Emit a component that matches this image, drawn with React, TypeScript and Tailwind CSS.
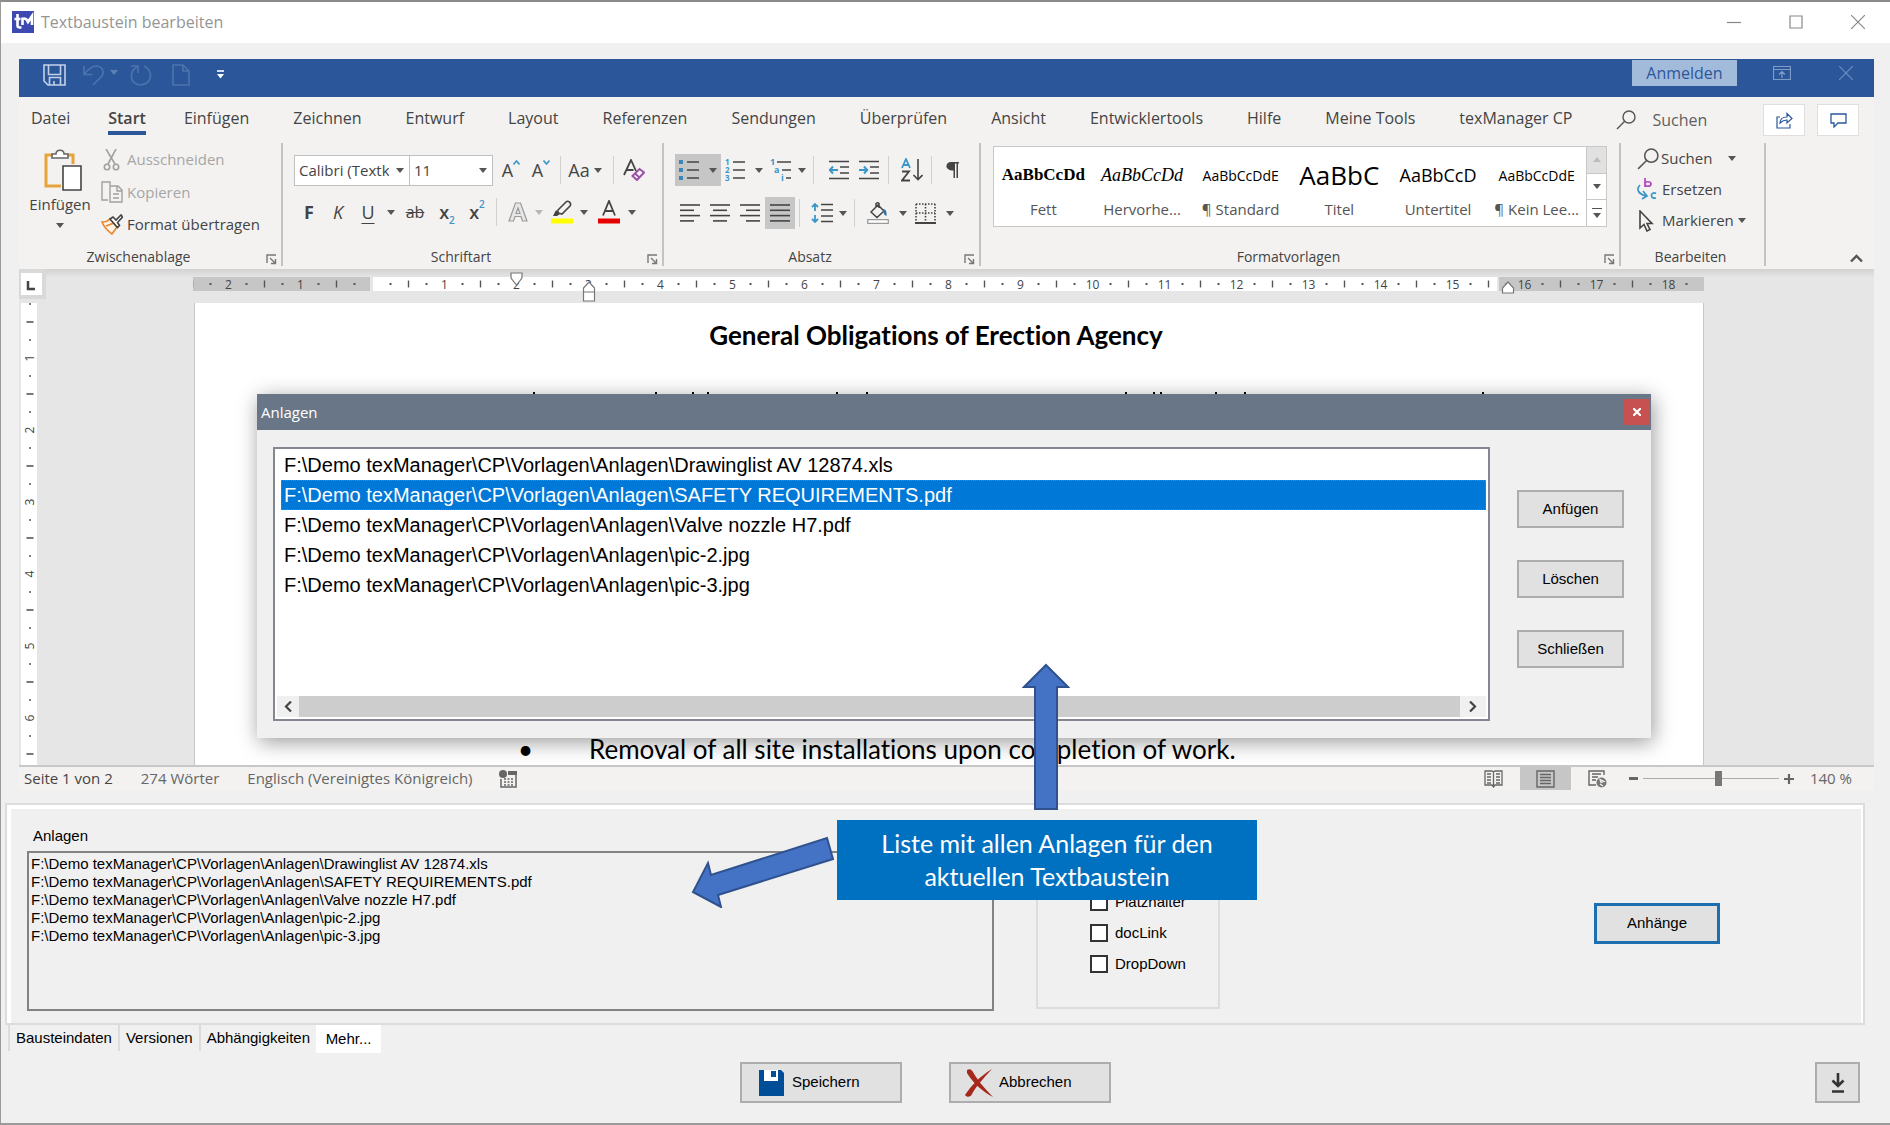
import type { ReactNode } from "react";
import clsx from "clsx";

const files = [
  "F:\\Demo texManager\\CP\\Vorlagen\\Anlagen\\Drawinglist AV 12874.xls",
  "F:\\Demo texManager\\CP\\Vorlagen\\Anlagen\\SAFETY REQUIREMENTS.pdf",
  "F:\\Demo texManager\\CP\\Vorlagen\\Anlagen\\Valve nozzle H7.pdf",
  "F:\\Demo texManager\\CP\\Vorlagen\\Anlagen\\pic-2.jpg",
  "F:\\Demo texManager\\CP\\Vorlagen\\Anlagen\\pic-3.jpg",
];

const ribbonTabs = [
  "Datei", "Start", "Einfügen", "Zeichnen", "Entwurf", "Layout", "Referenzen", "Sendungen",
  "Überprüfen", "Ansicht", "Entwicklertools", "Hilfe", "Meine Tools", "texManager CP",
];

const styleCards = [
  { name: "Fett", sample: "AaBbCcDd", cls: "font-['Liberation_Serif',serif] text-[17px] font-bold" },
  { name: "Hervorhe...", sample: "AaBbCcDd", cls: "font-['Liberation_Serif',serif] text-[18px] italic" },
  { name: "¶ Standard", sample: "AaBbCcDdE", cls: "text-[14px]" },
  { name: "Titel", sample: "AaBbC", cls: "text-[26px]" },
  { name: "Untertitel", sample: "AaBbCcD", cls: "text-[18px] text-[#5a5a5a]" },
  { name: "¶ Kein Lee...", sample: "AaBbCcDdE", cls: "text-[14px]" },
];

type IconProps = { w: number; h: number; children: ReactNode; className?: string; color?: string };

function Icon({ w, h, children, className, color = "#444" }: IconProps) {
  return (
    <svg
      width={w}
      height={h}
      viewBox={`0 0 ${w} ${h}`}
      fill="none"
      stroke={color}
      strokeWidth="1.6"
      className={clsx("shrink-0", className)}
      aria-hidden="true"
    >
      {children}
    </svg>
  );
}

function Caret({ className, color = "#555" }: { className?: string; color?: string }) {
  return (
    <Icon w={8} h={5} className={className}>
      <path d="M0 0h8l-4 5z" fill={color} stroke="none" />
    </Icon>
  );
}

function Tool({ label, className, children }: { label: string; className?: string; children: ReactNode }) {
  return (
    <button type="button" aria-label={label} className={clsx("flex h-8 shrink-0 items-center justify-center", className)}>
      {children}
    </button>
  );
}

function Divider() {
  return <span className="mx-1 h-7 w-px shrink-0 bg-[#d2d0ce]" />;
}

function Group({ title, launcher, className, children }: { title: string; launcher?: boolean; className?: string; children: ReactNode }) {
  return (
    <section aria-label={title} className={clsx("mb-[3px] flex flex-col border-r-2 border-[#c4c3c1]", className)}>
      <div className="flex h-[105px]">{children}</div>
      <div className="flex h-[18px] items-center pr-1">
        <span className={clsx("flex-1 text-center text-[14px] leading-[18px] text-[#444]", launcher && "pr-2")}>{title}</span>
        {launcher && (
          <Icon w={11} h={11} color="#777" className="mt-1">
            <path d="M1 9V1h9M4 4l5 5M9.500 5v4.500H5" strokeWidth="1.4" />
          </Icon>
        )}
      </div>
    </section>
  );
}

function Lines({ rows }: { rows: [number, number][] }) {
  return (
    <Icon w={20} h={20}>
      {rows.map(([a, b], i) => (
        <path key={i} d={`M${a} ${2 + i * 5.3}H${b}`} />
      ))}
    </Icon>
  );
}

function HorizontalRuler() {
  const marks = [];
  for (let q = -10; q <= 73; q++) {
    const x = 179.5 + q * 18;
    if (q === 0 || x > 1500) continue;
    if (q % 4 === 0) {
      marks.push(
        <text key={q} x={x} y="12" textAnchor="middle" fontSize="12" fill="#444" stroke="none">
          {Math.abs(q / 4)}
        </text>
      );
    } else if (q % 2 === 0) {
      marks.push(<path key={q} d={`M${x} 4v7`} stroke="#555" />);
    } else {
      marks.push(<path key={q} d={`M${x} 6.500v2`} stroke="#555" strokeWidth="2" />);
    }
  }
  return (
    <svg width="1511" height="33" viewBox="0 -1 1511 33" fill="none" strokeWidth="1.4" className="block font-['Open_Sans',sans-serif]" aria-label="Lineal">
      <path d="M0 7h177v14H0zM1306 7h205v14h-205z" fill="#c6c6c6" />
      <path d="M180 7h1124v14H180z" fill="#fff" />
      <g transform="translate(0 6.500)">{marks}</g>
      <g fill="#fff" stroke="#777" strokeWidth="1.2">
        <path d="M318 3h11v5l-5.500 7-5.500-7z" />
        <path d="M390.500 22v-4l5.500-6 5.500 6v4zM390.500 22h11v9h-11z" />
        <path d="M1309.500 23v-5l5.500-6 5.500 6v5z" />
      </g>
    </svg>
  );
}

function VerticalRuler() {
  const marks = [];
  for (let q = 1; q <= 26; q++) {
    const y = -17 + q * 18;
    if (q % 4 === 0) {
      marks.push(
        <text key={q} transform={`translate(13 ${y}) rotate(-90)`} textAnchor="middle" fontSize="12" fill="#444" stroke="none">
          {q / 4}
        </text>
      );
    } else {
      marks.push(<path key={q} d={q % 2 === 0 ? `M5.500 ${y}h7` : `M8 ${y}h2`} stroke="#555" />);
    }
  }
  return (
    <svg width="16" height="462" viewBox="0 0 16 462" fill="none" strokeWidth="1.6" className="ml-[2px] block bg-white font-['Open_Sans',sans-serif]" aria-label="Lineal vertikal">
      {marks}
    </svg>
  );
}

function TitleBar() {
  return (
    <header className="flex h-[41px] items-center bg-white pl-[11px] pb-[2px]">
      <svg width="22" height="22" viewBox="0 0 22 22" className="shrink-0" aria-hidden="true">
        <path d="M0 0h22v22H0z" fill="#3d48b0" />
        <path d="M5.500 3v11.500q0 2 2.500 2h1.500M2.500 8h6M10.500 14V6.500l0 2q1-2 4 0l0 0L16 11l4-6v9" fill="none" stroke="#fff" strokeWidth="2.600" />
      </svg>
      <h1 className="ml-[7px] flex-1 text-[16px] text-[#959595]">Textbaustein bearbeiten</h1>
      <div className="flex items-center gap-12 pr-[25px]">
        <button type="button" aria-label="Minimieren">
          <Icon w={14} h={14} color="#888"><path d="M0 7.500h14" strokeWidth="1.200" /></Icon>
        </button>
        <button type="button" aria-label="Maximieren">
          <Icon w={14} h={14} color="#888"><path d="M1 1h12v12H1z" strokeWidth="1.200" /></Icon>
        </button>
        <button type="button" aria-label="Fenster schließen">
          <Icon w={14} h={14} color="#888"><path d="M0 0l14 14M14 0L0 14" strokeWidth="1.200" /></Icon>
        </button>
      </div>
    </header>
  );
}

function QuickAccess() {
  return (
    <div className="flex h-[38px] items-start bg-[#2b579a] pl-6">
      <div className="flex h-[31px] flex-1 items-center">
        <button type="button" aria-label="Speichern (Schnellzugriff)">
          <Icon w={23} h={22} color="#c3d1e8">
            <path d="M1 1h21v20H5l-4-4zM5.500 1v9.500h12V1M6.500 21v-7.500h11V21M11 21v-4" />
          </Icon>
        </button>
        <button type="button" aria-label="Rückgängig" className="ml-[17px] flex items-center gap-[6px]">
          <Icon w={21} h={22} color="#4c73ad">
            <path d="M1 2v8.500h8.500M1.500 10C6 4 10 2 14 2c8 1 7 9 3 12l-7 7" />
          </Icon>
          <Caret color="#5d80b6" className="mb-1" />
        </button>
        <button type="button" aria-label="Wiederholen" className="ml-3">
          <Icon w={22} h={22} color="#4c73ad">
            <path d="M1 2h7v7M7.500 2.500C-1 7-1 20 10.500 21 22 20 24 7 14 2" />
          </Icon>
        </button>
        <button type="button" aria-label="Neues Dokument" className="ml-5">
          <Icon w={18} h={22} color="#4c73ad"><path d="M1 1h10l6 6v14H1zM11 1v6h6" /></Icon>
        </button>
        <button type="button" aria-label="Symbolleiste anpassen" className="ml-[27px]">
          <Icon w={7} h={9} color="#fff">
            <path d="M0 1h7" />
            <path d="M0 4h7L3.500 8.500z" fill="#fff" stroke="none" />
          </Icon>
        </button>
      </div>
      <button type="button" className="mt-px h-[26px] w-[105px] bg-[#a3bbdb] text-[16px] leading-[24px] text-[#2b579a]">
        Anmelden
      </button>
      <div className="flex h-[28px] items-center gap-12 pl-9 pr-[21px]">
        <button type="button" aria-label="Menüband-Anzeigeoptionen">
          <Icon w={18} h={14} color="#7f9cc9">
            <path d="M.5 .5h17v13H.5zM1 3.500h16M9 12V6M6 8.500L9 5.500l3 3" strokeWidth="1.200" />
          </Icon>
        </button>
        <button type="button" aria-label="Word schließen">
          <Icon w={14} h={14} color="#6d8dbf"><path d="M0 0l14 14M14 0L0 14" strokeWidth="1.200" /></Icon>
        </button>
      </div>
    </div>
  );
}

function Magnifier({ size }: { size: number }) {
  return (
    <svg width={size} height={size} viewBox="0 0 20 20" fill="none" stroke="#555" strokeWidth="1.400" className="shrink-0" aria-hidden="true">
      <circle cx="13" cy="7" r="6" />
      <path d="M8.700 11.300L1 19" />
    </svg>
  );
}

function RibbonTabs() {
  return (
    <nav className="flex h-[46px] items-center pl-3 text-[16px] text-[#444]">
      {ribbonTabs.map((t, i) => (
        <button
          key={t}
          type="button"
          className={clsx(
            "h-[30px] whitespace-nowrap border-b-4 leading-[26px]",
            i < 2 ? "mr-[38px]" : "mr-[44px]",
            t === "Start" ? "border-[#2b579a] font-semibold" : "border-transparent"
          )}
        >
          {t}
        </button>
      ))}
      <label className="flex min-w-0 flex-1 items-center gap-[16px] text-[#666]">
        <Magnifier size={20} />
        <input type="text" placeholder="Suchen" aria-label="Suchen" className="w-20 bg-transparent placeholder:text-[#5f5f5f]" />
      </label>
      <div className="flex gap-3 pr-[15px]">
        <button type="button" aria-label="Freigeben" className="flex h-8 w-[42px] items-center justify-center border border-[#e1dfdd] bg-white">
          <Icon w={17} h={17} color="#2b579a">
            <path d="M4 5H1v11h13v-4M4 11c0-4 3-6 7-6V1.500l5 5-5 4.500V8C8 8 6 9 4 11z" strokeWidth="1.200" />
          </Icon>
        </button>
        <button type="button" aria-label="Kommentare" className="flex h-8 w-[42px] items-center justify-center border border-[#e1dfdd] bg-white">
          <Icon w={17} h={15} color="#2b579a">
            <path d="M1 1h15v9H8l-4 4v-4H1z" strokeWidth="1.300" />
          </Icon>
        </button>
      </div>
    </nav>
  );
}

function ClipboardGroup() {
  return (
    <Group title="Zwischenablage" launcher className="w-[264px] shrink-0">
      <button type="button" className="flex w-[82px] flex-col items-center pt-[6px] text-[15px] text-[#444]">
        <Icon w={38} h={42} className="ml-1.5">
          <path d="M9 6H2v31h15M23 6h6v9" stroke="#e8a33d" strokeWidth="3" />
          <path d="M8 9V5h4c0-5 8-5 8 0h4v4z" fill="#fff" stroke="#666" />
          <path d="M19 17h18v24H19z" fill="#fff" stroke="#444" />
        </Icon>
        <span className="mt-[2px] leading-[22px]">Einfügen</span>
        <Caret className="mt-2" />
      </button>
      <div className="flex flex-col text-[15px]">
        <button type="button" className="flex h-[33px] items-center gap-[6px] pl-[2px] text-[#a6a6a6]">
          <Icon w={18} h={22} color="#a0a0a0">
            <path d="M3 0l9 15M13 0L5 15" />
            <circle cx="4" cy="18" r="2.700" />
            <circle cx="13" cy="18" r="2.700" />
          </Icon>
          Ausschneiden
        </button>
        <button type="button" className="flex h-8 items-center gap-1 text-[#a6a6a6]">
          <Icon w={22} h={22} color="#a0a0a0">
            <path d="M7 19H1V1h8v3M9 5h8l4 4v12H9zM16 5v5h5M12 13h6M12 17h6" strokeWidth="1.400" />
          </Icon>
          Kopieren
        </button>
        <button type="button" className="flex h-[33px] items-center gap-1 text-[#444]">
          <Icon w={22} h={21}>
            <path d="M1 8c4 0 6-1 8-3l7 8-5 7C7 17 3 13 1 8zM5 12l8-3" stroke="#e8862d" fill="#fdf3e6" />
            <path d="M9 5l3-2 3 3 5-5 1.500 2-5 5.500 2 3-2 2z" fill="#fff" />
          </Icon>
          Format übertragen
        </button>
      </div>
    </Group>
  );
}

function FontGroup() {
  return (
    <Group title="Schriftart" launcher className="w-[381px] shrink-0">
      <div className="flex flex-col pl-[11px] pt-[11px] text-[#444]">
        <div className="flex h-8 items-center">
          <label className="relative flex items-center">
            <select aria-label="Schriftart" className="h-[31px] w-[116px] appearance-none border border-[#c0c0c0] bg-white pl-1 pr-5 text-[15px]">
              <option>Calibri (Textkörper)</option>
            </select>
            <Caret className="pointer-events-none absolute right-1.5" />
          </label>
          <label className="relative -ml-px flex items-center">
            <select aria-label="Schriftgrad" className="h-[31px] w-[84px] appearance-none border border-[#c0c0c0] bg-white pl-1 text-[15px]">
              <option>11</option>
            </select>
            <Caret className="pointer-events-none absolute right-1.5" />
          </label>
          <Tool label="Schriftgrad vergrößern" className="ml-[3px] w-[30px] text-[18px]">
            A
            <Icon w={7} h={5} color="#3a96c8" className="mb-4"><path d="M.5 4.500l3-3.500 3 3.500" /></Icon>
          </Tool>
          <Tool label="Schriftgrad verkleinern" className="w-[30px] text-[18px]">
            A
            <Icon w={7} h={5} color="#3a96c8" className="mb-4"><path d="M.5 .5l3 3.500 3-3.500" /></Icon>
          </Tool>
          <Divider />
          <Tool label="Groß-/Kleinschreibung" className="-ml-1 w-12 gap-1 text-[18px]">
            Aa <Caret />
          </Tool>
          <Divider />
          <Tool label="Formatierung löschen" className="ml-1 w-6">
            <Icon w={22} h={22}>
              <path d="M1 16L8 1l5 11M3.500 11h7" strokeWidth="1.800" />
              <path d="M9.500 17l7-7 4.500 3.500-7 7.500zM12 14.500l4.500 4" stroke="#9b4fa8" fill="#fff" strokeWidth="2" />
            </Icon>
          </Tool>
        </div>
        <div className="mt-[10px] flex h-8 items-center text-[18px]">
          <Tool label="Fett" className="w-[30px] font-bold">F</Tool>
          <Tool label="Kursiv" className="w-7 italic">K</Tool>
          <Tool label="Unterstrichen" className="w-8 underline underline-offset-4">U</Tool>
          <Caret className="mx-[3px]" />
          <Tool label="Durchgestrichen" className="w-[34px] text-[16px] line-through">ab</Tool>
          <Tool label="Tiefgestellt" className="w-[30px] font-semibold">
            x<span className="mt-4 text-[10px] text-[#3a96c8]">2</span>
          </Tool>
          <Tool label="Hochgestellt" className="w-[30px] font-semibold">
            x<span className="mb-4 text-[10px] text-[#3a96c8]">2</span>
          </Tool>
          <Divider />
          <Tool label="Texteffekte" className="w-[34px] text-[#aaa]">
            <Icon w={20} h={20} color="#999">
              <path d="M7.500 1h5L19 19h-4.500l-1.500-4.500H7L5.500 19H1zM10 6l-2 5.500h4z" strokeWidth="1.200" fill="#e6e6e6" />
            </Icon>
          </Tool>
          <Caret color="#b5b5b5" />
          <Tool label="Texthervorhebungsfarbe" className="ml-[2px] w-[34px]">
            <Icon w={22} h={24}>
              <path d="M0 18.500h22v5H0z" fill="#ff0" stroke="none" />
              <path d="M2 16l3-6 4 4-3 2z" fill="#444" stroke="none" />
              <path d="M7 10l8-8c2-2 6 1 4 4l-8 8-4-1z" />
            </Icon>
          </Tool>
          <Caret className="mx-px" />
          <Tool label="Schriftfarbe" className="ml-[3px] w-[34px]">
            <Icon w={22} h={24}>
              <path d="M0 18.500h22v5H0z" fill="#e60000" stroke="none" />
              <path d="M5 15.500L11 1l6 14.500M7 11h8" strokeWidth="1.800" />
            </Icon>
          </Tool>
          <Caret className="mx-[2px]" />
        </div>
      </div>
    </Group>
  );
}

function ParagraphGroup() {
  return (
    <Group title="Absatz" launcher className="w-[317px] shrink-0">
      <div className="flex flex-col pl-[11px] pt-[11px] text-[#444]">
        <div className="flex h-8 items-center">
          <Tool label="Aufzählungszeichen" className="w-[46px] gap-[10px] bg-[#c6c6c6]">
            <Icon w={20} h={20}>
              <path d="M8 2h13M8 10h13M8 18h13" />
              <path d="M0 0h4v4H0zM0 8h4v4H0zM0 16h4v4H0z" fill="#3a86b4" stroke="none" />
            </Icon>
            <Caret />
          </Tool>
          <Tool label="Nummerierung" className="w-[46px] gap-[10px]">
            <Icon w={20} h={22}>
              <path d="M8 3h13M8 11h13M8 19h13" />
              <g fill="#3a96c8" stroke="none" fontSize="8" fontWeight="700">
                <text x="0" y="6">1</text>
                <text x="0" y="14">2</text>
                <text x="0" y="22">3</text>
              </g>
            </Icon>
            <Caret />
          </Tool>
          <Tool label="Liste mit mehreren Ebenen" className="w-[42px] gap-[7px]">
            <Icon w={21} h={22}>
              <path d="M7 3h14M12 11h9M16 19h5" />
              <g fill="#3a96c8" stroke="none" fontSize="9" fontWeight="700">
                <text x="0" y="6">1</text>
                <text x="4" y="14">a</text>
                <text x="11" y="22">i</text>
              </g>
            </Icon>
            <Caret />
          </Tool>
          <Divider />
          <Tool label="Einzug verkleinern" className="ml-1.5 w-[30px]">
            <Icon w={20} h={20}>
              <path d="M0 1.500h20M11 7h9M11 13h9M0 18.500h20" />
              <path d="M0 10h9M4 6.500L.8 10 4 13.500" stroke="#3a96c8" strokeWidth="2" />
            </Icon>
          </Tool>
          <Tool label="Einzug vergrößern" className="w-[30px]">
            <Icon w={20} h={20}>
              <path d="M0 1.500h20M11 7h9M11 13h9M0 18.500h20" />
              <path d="M0 10h8M5 6.500L8.200 10 5 13.500" stroke="#3a96c8" strokeWidth="2" />
            </Icon>
          </Tool>
          <Divider />
          <Tool label="Sortieren" className="ml-1 w-[30px]">
            <Icon w={22} h={24}>
              <path d="M1 10L5 1l4 9M2.500 7h5" stroke="#3a96c8" strokeWidth="1.800" />
              <path d="M1 13.500h7L1 22.500h8" strokeWidth="1.800" />
              <path d="M17 1v20M12.500 17l4.500 4.500 4.500-4.500" />
            </Icon>
          </Tool>
          <Divider />
          <Tool label="Formatierungszeichen" className="ml-1 w-6">
            <Icon w={13} h={18}>
              <path d="M7 1h6v1.500h-1V17h-1.500V2.500H9V17H7.500V9.500C-2 9.500-1 1 5 1z" fill="#444" stroke="none" />
            </Icon>
          </Tool>
        </div>
        <div className="mt-[11px] flex h-8 items-center">
          <Tool label="Linksbündig" className="w-[30px]"><Lines rows={[[0, 20], [0, 14], [0, 20], [0, 14]]} /></Tool>
          <Tool label="Zentriert" className="w-[30px]"><Lines rows={[[0, 20], [3, 17], [0, 20], [3, 17]]} /></Tool>
          <Tool label="Rechtsbündig" className="w-[30px]"><Lines rows={[[0, 20], [6, 20], [0, 20], [6, 20]]} /></Tool>
          <Tool label="Blocksatz" className="w-[30px] bg-[#c6c6c6]"><Lines rows={[[0, 20], [0, 20], [0, 20], [0, 20]]} /></Tool>
          <Divider />
          <Tool label="Zeilenabstand" className="ml-1 w-[42px] gap-1.5">
            <Icon w={22} h={20}>
              <path d="M10 1.500h12M10 7h12M10 13h12M10 18.500h12" />
              <path d="M4 1v7M4 12v7M1 4l3-3 3 3M1 16l3 3 3-3" stroke="#3a96c8" strokeWidth="1.800" />
            </Icon>
            <Caret />
          </Tool>
          <Divider />
          <Tool label="Schattierung" className="ml-1 w-12 gap-2.5">
            <Icon w={22} h={22}>
              <path d="M4 10l7-7 6 6-7 6.500zM9 5V1.500q2-1.500 3 0V6" strokeWidth="1.500" />
              <path d="M16 7c3 0 4 3 3.500 7-3-1-3-4-3.500-7z" fill="#2e75a8" stroke="none" />
              <path d="M.7 17.700h20.600v3.600H.7z" fill="#fff" stroke="#999" strokeWidth="1.200" />
            </Icon>
            <Caret />
          </Tool>
          <Tool label="Rahmen" className="ml-[2px] w-[42px] gap-2.5">
            <Icon w={21} h={21}>
              <path d="M1 1h19M1 1v18M20 1v18M10.500 1v18M1 10h19" strokeDasharray="1.500 1.500" />
              <path d="M0 20h21" strokeWidth="2" />
            </Icon>
            <Caret />
          </Tool>
        </div>
      </div>
    </Group>
  );
}

function StylesGroup() {
  return (
    <Group title="Formatvorlagen" launcher className="min-w-0 flex-1">
      <div className="mx-3 mt-[3px] flex h-[81px] min-w-0 flex-1 border border-[#c8c8c8] bg-white">
        <div className="flex min-w-0 flex-1">
          {styleCards.map((s) => (
            <button key={s.name} type="button" className="flex min-w-0 flex-1 flex-col items-center pt-3">
              <span className={clsx("flex h-8 items-center whitespace-nowrap text-black", s.cls)}>
                {s.sample}
              </span>
              <span className="mt-[7px] whitespace-nowrap text-[15px] leading-[22px] text-[#555]">{s.name}</span>
            </button>
          ))}
        </div>
        <div className="flex w-5 flex-col divide-y divide-[#c8c8c8] border-l border-[#c8c8c8]">
          <button type="button" aria-label="Vorherige Zeile" className="flex flex-1 items-center justify-center bg-[#e1e1e1]">
            <Icon w={8} h={5}><path d="M0 5h8L4 0z" fill="#bbb" stroke="none" /></Icon>
          </button>
          <button type="button" aria-label="Nächste Zeile" className="flex flex-1 items-center justify-center">
            <Caret />
          </button>
          <button type="button" aria-label="Weitere" className="flex flex-1 flex-col items-center justify-center gap-1">
            <span className="h-px w-2.5 bg-[#555]" />
            <Caret />
          </button>
        </div>
      </div>
    </Group>
  );
}

function EditGroup() {
  return (
    <Group title="Bearbeiten" className="w-[145px] shrink-0">
      <div className="flex flex-col pl-4 text-[15px] text-[#444]">
        <button type="button" className="flex h-[31px] items-center">
          <Magnifier size={22} />
          <span className="ml-[2px]">Suchen</span>
          <Caret className="ml-4" />
        </button>
        <button type="button" className="flex h-[31px] items-center">
          <Icon w={21} h={23}>
            <path d="M8 0v9M8 6c0-3 6-3 6 0s-6 3-6 0" stroke="#b146c2" strokeWidth="1.700" />
            <path d="M19 15.500c-5-3-7 6 0 4.500" stroke="#3a96c8" strokeWidth="1.700" />
            <path d="M3 7c-4 4-2 9 6 11M6 13l4 5-5 3" stroke="#3a96c8" strokeWidth="1.700" />
          </Icon>
          <span className="ml-1">Ersetzen</span>
        </button>
        <button type="button" className="flex h-[31px] items-center">
          <Icon w={21} h={22}>
            <path d="M3 1v17l4-3.500 3 6.500 3-1.500-3-6h5z" />
          </Icon>
          <span className="ml-1">Markieren</span>
          <Caret className="ml-1" />
        </button>
      </div>
    </Group>
  );
}

function Ribbon() {
  return (
    <div className="bg-[#f3f2f1]">
      <RibbonTabs />
      <div className="flex">
        <ClipboardGroup />
        <FontGroup />
        <ParagraphGroup />
        <StylesGroup />
        <EditGroup />
        <div className="flex w-[108px] shrink-0 items-end justify-end pb-[6px] pr-[11px]">
          <button type="button" aria-label="Menüband reduzieren">
            <Icon w={13} h={9} color="#555"><path d="M1 7.500l5.500-5.500L12 7.500" strokeWidth="2.400" /></Icon>
          </button>
        </div>
      </div>
    </div>
  );
}

// ascenders of the paragraph that runs on behind the dialog
const ascenders = [163, 285, 322, 337, 466, 496, 755, 783, 790, 845, 874, 1112];

function DocumentArea() {
  return (
    <div className="flex min-h-[400px] flex-1 flex-col overflow-hidden bg-[#e6e6e6]">
      <div className="flex h-[34px] shrink-0 bg-gradient-to-b from-[#d2d2d2] to-[#e6e6e6] to-25%">
        <div className="flex w-[174px] shrink-0">
          <div className="h-[30px] w-[27px] border-4 border-l-2 border-[#d9d9d9] bg-white">
            <Icon w={20} h={22}><path d="M7 8v8h7" strokeWidth="2.500" /></Icon>
          </div>
        </div>
        <div className="min-w-0 flex-1 overflow-hidden"><HorizontalRuler /></div>
      </div>
      <div className="flex min-h-0 flex-1 basis-0 overflow-hidden">
        <div className="w-[18px] shrink-0"><VerticalRuler /></div>
        <article className="ml-[157px] mr-[170px] flex h-[462px] min-w-0 flex-1 flex-col border-x border-[#c6c6c6] bg-white pl-[176px] pr-[202px] font-['Lato',sans-serif] text-black [font-variant-ligatures:none]">
          <h2 className="mt-[16px] text-center text-[26px] font-bold leading-[32px]">General Obligations of Erection Agency</h2>
          <svg width="1130" height="6" viewBox="0 0 1130 6" className="mt-[39px] block" aria-hidden="true">
            {ascenders.map((x) => (
              <path key={x} d={`M${x} 2v4`} stroke="#000" strokeWidth="2" />
            ))}
          </svg>
          <ul className="mt-auto pb-[3px]">
            <li className="flex text-[26px] leading-[26px]">
              <span className="ml-[147px] w-[71px]">•</span>
              <span className="whitespace-nowrap">Removal of all site installations upon completion of work.</span>
            </li>
          </ul>
        </article>
      </div>
    </div>
  );
}

function StatusBar() {
  return (
    <footer className="flex h-[25px] items-center border-t-2 border-[#c8c8c8] bg-[#f3f2f1] pl-[5px] pr-[22px] text-[15px] text-[#666]">
      <span className="text-[#444]">Seite 1 von 2</span>
      <span className="ml-[28px]">274 Wörter</span>
      <span className="ml-[28px] flex-1">
        <span className="inline-flex items-center gap-[26px]">
          Englisch (Vereinigtes Königreich)
          <Icon w={18} h={18} color="#666">
            <circle cx="4" cy="4" r="4" fill="#666" stroke="none" />
            <path d="M9 1h9v4H9z" fill="#666" stroke="none" />
            <path d="M2 9v8h15V5" strokeWidth="1.500" />
            <path d="M5 9h10M5 12h10M5 15h10" strokeDasharray="2 1.500" />
          </Icon>
        </span>
      </span>
      <div className="flex h-full items-center">
        <button type="button" aria-label="Lesemodus" className="flex w-9 justify-center">
          <Icon w={19} h={18} color="#666">
            <path d="M1 1h7l1.500 1L11 1h7v14h-7l-1.500 2L8 15H1zM9.500 2v15M3 4h4M3 7h4M3 10h4M3 13h4M12 4h4M12 7h4M12 10h4M12 13h4" strokeWidth="1.300" />
          </Icon>
        </button>
        <button type="button" aria-label="Seitenlayout" className="ml-[9px] flex h-full w-[51px] items-center justify-center bg-[#c6c6c6]">
          <Icon w={19} h={18} color="#666">
            <path d="M1 1h17v16H1zM4 4.500h11M4 7.500h11M4 10.500h11M4 13.500h11" strokeWidth="1.400" />
          </Icon>
        </button>
        <button type="button" aria-label="Weblayout" className="ml-[17px]">
          <Icon w={19} h={18} color="#666">
            <path d="M8 15H1V1h15v4M4 4h9M4 7h6M4 10h4" strokeWidth="1.400" />
            <circle cx="13.500" cy="12.500" r="5" fill="#777" stroke="none" />
            <path d="M12 9.500l4 2-3 1zM12 14l3 2" stroke="#f3f2f1" strokeWidth="1.200" />
          </Icon>
        </button>
      </div>
      <button type="button" aria-label="Verkleinern" className="ml-[22px] h-[3px] w-[9px] bg-[#666]" />
      <input
        type="range"
        min={0}
        max={136}
        defaultValue={76}
        aria-label="Zoom"
        className="mx-[5px] h-4 w-[136px] appearance-none bg-[linear-gradient(#aaa,#aaa)] bg-[length:100%_1px] bg-center bg-no-repeat [&::-webkit-slider-thumb]:h-[15px] [&::-webkit-slider-thumb]:w-[7px] [&::-webkit-slider-thumb]:appearance-none [&::-webkit-slider-thumb]:bg-[#777]"
      />
      <button type="button" aria-label="Vergrößern">
        <Icon w={10} h={10} color="#666"><path d="M5 0v10M0 5h10" strokeWidth="2.200" /></Icon>
      </button>
      <span className="w-[58px] text-right">140 %</span>
    </footer>
  );
}

const dialogButton = "h-[38px] w-[107px] border-2 border-[#adadad] bg-[#e1e1e1] text-[15px]";

function AttachmentDialog() {
  return (
    <div
      role="dialog"
      aria-label="Anlagen"
      className="absolute left-[256px] right-[239px] top-[392px] bg-[#f0f0f0] shadow-[2px_4px_20px_rgba(0,0,0,0.4)]"
    >
      <div className="flex h-9 items-center justify-between bg-[#687688] pl-[4px]">
        <h2 className="text-[15px] text-white">Anlagen</h2>
        <button type="button" aria-label="Anlagen schließen" className="mr-px flex h-[26px] w-[26px] items-center justify-center bg-[#c75050]">
          <Icon w={8} h={8} color="#fff"><path d="M0 0l8 8M8 0L0 8" strokeWidth="2.200" /></Icon>
        </button>
      </div>
      <div className="flex gap-[27px] pb-[17px] pl-4 pr-[27px] pt-[17px] font-['Liberation_Sans',sans-serif]">
        <div className="flex h-[274px] min-w-0 flex-1 flex-col border-2 border-[#828790] bg-white px-[2px]">
          <ul role="listbox" aria-label="Anlagen" className="flex-1 pl-1 pt-px text-[20px] leading-[26px] text-black">
            {files.map((f, i) => (
              <li
                key={f}
                role="option"
                aria-selected={i === 1}
                className={clsx("h-[30px] whitespace-nowrap border px-[2px] pt-px", i === 1 ? "border-dotted border-[#8a7a5a] bg-[#0078d7] text-white" : "border-transparent")}
              >
                {f}
              </li>
            ))}
          </ul>
          <div className="mb-[2px] flex h-[21px] bg-[#f0f0f0]">
            <button type="button" aria-label="Nach links" className="flex w-[22px] items-center justify-center">
              <Icon w={8} h={11} color="#444"><path d="M7 .5L2 5.500l5 5" strokeWidth="2.200" /></Icon>
            </button>
            <div className="flex-1 bg-[#cdcdcd]" />
            <button type="button" aria-label="Nach rechts" className="flex w-[26px] items-center justify-center">
              <Icon w={8} h={11} color="#444"><path d="M1 .5l5 5-5 5" strokeWidth="2.200" /></Icon>
            </button>
          </div>
        </div>
        <div className="flex flex-col gap-8 pt-[43px]">
          <button type="button" className={dialogButton}>Anfügen</button>
          <button type="button" className={dialogButton}>Löschen</button>
          <button type="button" className={dialogButton}>Schließen</button>
        </div>
      </div>
    </div>
  );
}

function MorePanel() {
  return (
    <div className="ml-[4px] mr-[25px] h-[222px] border-2 border-[#dcdcdc]">
      <div className="flex h-full border-l-4 border-r-2 border-t-4 border-white pl-4">
        <div className="flex w-[967px] flex-col pt-[16px]">
          <span className="pl-[6px] text-[15px] leading-[22px]">Anlagen</span>
          <ul className="mt-[4px] h-[160px] border-2 border-[#828282] pl-[2px] pt-[2px] text-[15px] leading-[18px]">
            {files.map((f) => (
              <li key={f}>{f}</li>
            ))}
          </ul>
        </div>
        <div className="ml-[42px] mt-[18px] flex h-[182px] w-[184px] flex-col gap-[13px] border-2 border-[#dcdcdc] pl-[52px] pt-[64px] text-[15px]">
          {["Platzhalter", "docLink", "DropDown"].map((o) => (
            <label key={o} className="flex h-[18px] items-center gap-[7px]">
              <input type="checkbox" className="h-[18px] w-[18px] appearance-none border-2 border-[#333] bg-white" />
              {o}
            </label>
          ))}
        </div>
        <div className="flex flex-1 justify-end pr-[141px] pt-[94px]">
          <button type="button" className="h-[41px] w-[126px] border-[3px] border-[#1d6fb0] bg-[#e1e1e1] text-[15px]">
            Anhänge
          </button>
        </div>
      </div>
    </div>
  );
}

function BottomTabs() {
  return (
    <div role="tablist" className="flex h-[28px] items-start pl-[7px] text-[15px]">
      {["Bausteindaten", "Versionen", "Abhängigkeiten"].map((t) => (
        <button key={t} type="button" role="tab" aria-selected={false} className="h-[26px] border-l-2 border-[#dcdcdc] px-1.5">
          {t}
        </button>
      ))}
      <button type="button" role="tab" aria-selected className="h-7 w-[65px] bg-white">
        Mehr...
      </button>
    </div>
  );
}

function ActionBar() {
  const button = "flex h-[41px] w-[162px] items-center border-2 border-[#adadad] bg-[#e1e1e1]";
  return (
    <div className="flex items-center pb-[20px] pr-[30px] pt-[9px] text-[15px]">
      <div className="flex flex-1 justify-center gap-[47px] pr-[10px]">
        <button type="button" className={clsx(button, "gap-2 pl-[17px]")}>
          <svg width="25" height="26" viewBox="0 0 25 26" aria-hidden="true">
            <path d="M0 0h22l3 3v23H0z" fill="#004e98" />
            <path d="M5 0h14v11H5z" fill="#fff" />
            <path d="M12 1h5v6h-5z" fill="#004e98" />
          </svg>
          Speichern
        </button>
        <button type="button" className={clsx(button, "gap-1.5 pl-[14px]")}>
          <svg width="28" height="28" viewBox="0 0 28 28" aria-hidden="true">
            <path d="M2 1c3-2 5 0 6 2 4 7 10 15 20 25C18 23 8 14 2 4z" fill="#a5281b" />
            <path d="M27 0C18 10 12 16 7 25c-1 3-5 4-7 1C6 17 14 8 27 0z" fill="#a5281b" />
          </svg>
          Abbrechen
        </button>
      </div>
      <button type="button" aria-label="Nach unten" className="-ml-[45px] flex h-[41px] w-[45px] items-center justify-center border-2 border-[#adadad] bg-[#e1e1e1]">
        <Icon w={14} h={20} color="#333">
          <path d="M7 0v13M1.500 7.500L7 13l5.500-5.500M1 18.500h12" strokeWidth="2.600" />
        </Icon>
      </button>
    </div>
  );
}

function Annotations() {
  return (
    <>
      <svg width="145" height="72" viewBox="0 0 145 72" className="absolute left-[690px] top-[834px]" aria-hidden="true">
        <path d="M136 2l6 21-115 36 3 12L2 56l15-29 3 12z" fill="#4472c4" stroke="#2f528f" strokeWidth="2" />
      </svg>
      <svg width="48" height="148" viewBox="0 0 48 148" className="absolute left-[1021px] top-[661px]" aria-hidden="true">
        <path d="M24 2l22 22H35v122H13V24H2z" fill="#4472c4" stroke="#2f528f" strokeWidth="2" />
      </svg>
      <p className="absolute left-[836px] top-[818px] flex h-[80px] w-[420px] items-center justify-center bg-[#0070c0] px-8 text-center font-['Lato',sans-serif] text-[25px] leading-[33px] text-white [font-variant-ligatures:none]">
        Liste mit allen Anlagen für den aktuellen Textbaustein
      </p>
    </>
  );
}

export default function App() {
  return (
    <div className="relative flex min-h-screen flex-col overflow-hidden border-b-2 border-l border-t-2 border-[#9a9a9a] border-t-[#8c8a8a] bg-[#f0f0f0] font-['Open_Sans',sans-serif] text-black">
      <TitleBar />
      <main className="ml-[18px] mr-4 mt-4 flex flex-1 flex-col">
        <QuickAccess />
        <Ribbon />
        <DocumentArea />
        <StatusBar />
      </main>
      <div className="mt-[13px] font-['Liberation_Sans',sans-serif]">
        <MorePanel />
        <BottomTabs />
        <ActionBar />
      </div>
      <AttachmentDialog />
      <Annotations />
    </div>
  );
}
